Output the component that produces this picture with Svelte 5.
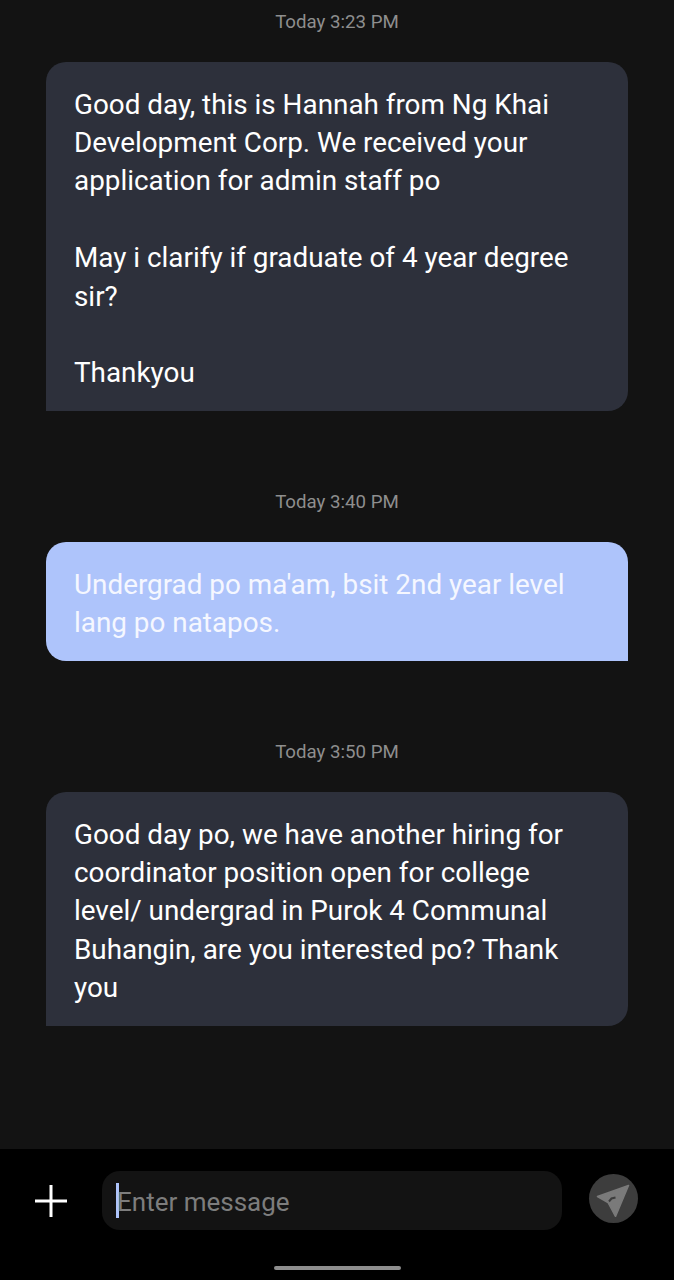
<script>
	const thread = [
		{ time: 'Today 3:23 PM', mine: false, text: 'Good day, this is Hannah from Ng Khai Development Corp. We received your application for admin staff po\n\nMay i clarify if graduate of 4 year degree sir?\n\nThankyou' },
		{ time: 'Today 3:40 PM', mine: true, text: "Undergrad po ma'am, bsit 2nd year level lang po natapos." },
		{ time: 'Today 3:50 PM', mine: false, text: 'Good day po, we have another hiring for coordinator position open for college level/ undergrad in Purok 4 Communal Buhangin, are you interested po? Thank you' }
	];
</script>

<div class="screen">
	<main class="thread">
		{#each thread as msg}
			<div class="time">{msg.time}</div>
			<div class="bubble" class:mine={msg.mine}>{msg.text}</div>
		{/each}
	</main>

	<footer class="composer">
		<div class="row">
			<button class="add" aria-label="Add">
				<svg width="34" height="34" viewBox="0 0 34 34"><path d="M17 1v32M1 17h32" stroke="#fff" stroke-width="3" fill="none" /></svg>
			</button>
			<div class="input">
				<span class="caret"></span>
				<span class="placeholder">Enter message</span>
			</div>
			<button class="send" aria-label="Send">
				<svg width="36" height="36" viewBox="0 0 36 36">
					<path d="M32.5 4.5 1.5 15.5 12 21.5 19.5 35.5Z" fill="#7a7a7a" stroke="#7a7a7a" stroke-width="1.5" stroke-linejoin="round" />
					<path d="M13 20.5 15.5 17.5 19.5 16.5" fill="none" stroke="#3d3d3d" stroke-width="2" />
				</svg>
			</button>
		</div>
		<div class="home"></div>
	</footer>
</div>

<style>
	:global(body) { background: #000; }
	.screen {
		width: 674px;
		height: 1280px;
		display: flex;
		flex-direction: column;
		background: #131313;
		font-family: Roboto, "Noto Sans", sans-serif;
		overflow: hidden;
	}
	.thread {
		flex: 1;
		padding: 10px 46px 0;
	}
	.time {
		height: 24px;
		line-height: 24px;
		margin-bottom: 28px;
		text-align: center;
		font-size: 18.7px;
		color: #8e8e8e;
	}
	.bubble {
		margin-bottom: 79px;
		padding: 23.5px 28px 18.5px;
		background: #2d303b;
		border-radius: 20px 20px 20px 0;
		color: #fff;
		font-size: 27.85px;
		line-height: 38.4px;
		white-space: pre-line;
	}
	.bubble.mine {
		background: #aec4fb;
		border-radius: 20px 20px 0 20px;
		color: #f5f7ff;
	}
	.composer {
		height: 131px;
		background: #000;
		display: flex;
		flex-direction: column;
		align-items: center;
	}
	.row {
		width: 100%;
		display: flex;
		align-items: center;
		margin-top: 22px;
		padding: 0 36px 0 34px;
		box-sizing: border-box;
	}
	button {
		padding: 0;
		border: none;
		display: flex;
		align-items: center;
		justify-content: center;
	}
	.add {
		width: 34px;
		height: 34px;
		background: none;
		margin-right: 34px;
	}
	.input {
		flex: 1;
		height: 59px;
		display: flex;
		align-items: center;
		padding-left: 14px;
		background: #131313;
		border-radius: 18px;
	}
	.caret {
		width: 3px;
		height: 35px;
		background: #aec4fb;
	}
	.placeholder {
		font-size: 26px;
		color: #7d7d7d;
		margin: 2px 0 0 -2px;
	}
	.send {
		width: 49px;
		height: 49px;
		margin: -4px 0 0 27px;
		border-radius: 50%;
		background: #3d3d3d;
	}
	.home {
		width: 127px;
		height: 4px;
		margin-top: 36px;
		border-radius: 2px;
		background: #8e8e8e;
	}
</style>
